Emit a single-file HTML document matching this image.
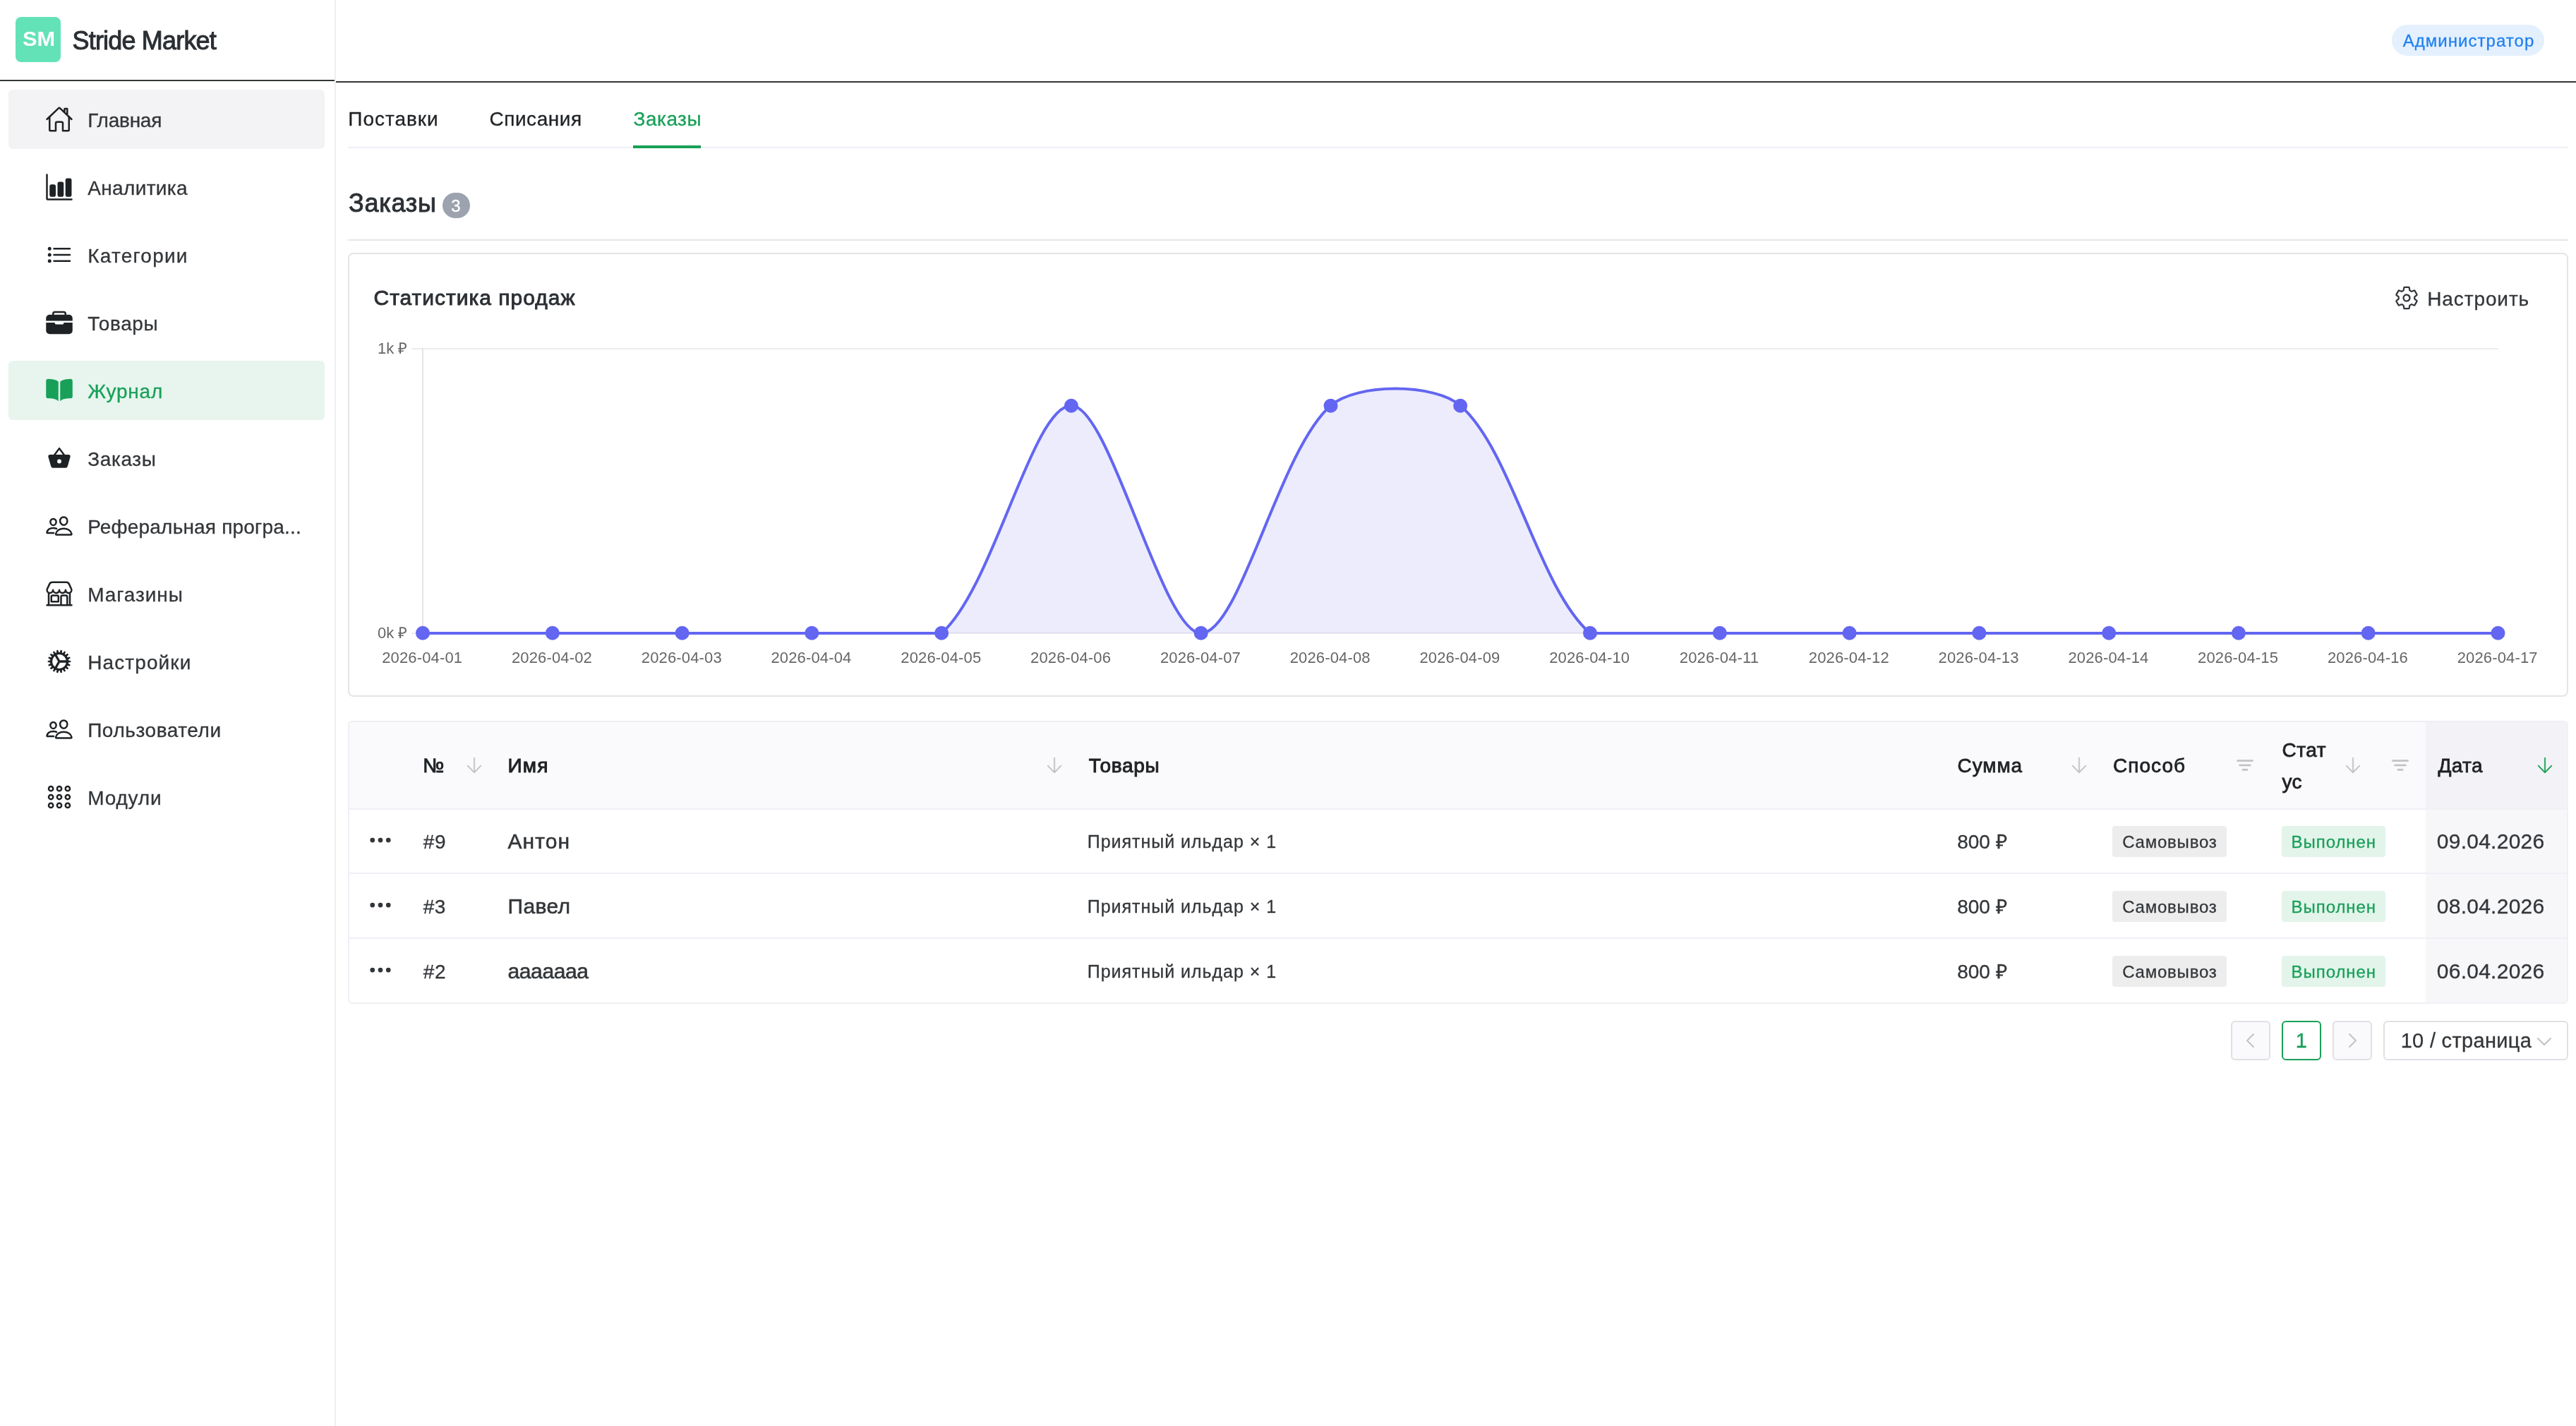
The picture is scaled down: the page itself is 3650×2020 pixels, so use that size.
<!DOCTYPE html>
<html lang="ru"><head><meta charset="utf-8"><title>Stride Market — Журнал · Заказы</title>
<style>
*{box-sizing:border-box;margin:0;padding:0}
html,body{width:3650px;height:2020px;overflow:hidden;background:#fff}
body{position:relative;font-family:'Liberation Sans',sans-serif;color:#333639;-webkit-font-smoothing:antialiased;will-change:transform}
span[id^=t],div[id^=t],h2[id^=t],h3[id^=t]{position:absolute;white-space:pre;font-weight:400}
svg.ion,svg.nv{position:absolute;display:block}
a{color:inherit;text-decoration:none}
.sider{position:absolute;left:0;top:0;width:476px;height:2020px;border-right:2px solid #efeff5;background:#fff}
.brand{position:absolute;left:0;top:0;width:474px;height:115px;border-bottom:2px solid #333639}
.logo{position:absolute;left:22px;top:24px;width:64px;height:64px;border-radius:8px;background:#63e2b7}
.logo span{font-weight:700 !important}
.menu{position:absolute;left:0;top:0;width:474px}
.item{position:absolute;left:12px;width:448px;height:84px;border-radius:6px;color:#333639;display:block}
.item svg{color:#1f2225}
.item.hover{background:#f3f3f5}
.item.active{background:#e7f5ee;color:#18a058}
.item.active svg{color:#18a058}
.topbar{position:absolute;left:476px;top:0;width:3174px;height:117px;border-bottom:2px solid #333639;background:#fff}
.role{position:absolute;left:2913px;top:35px;width:216px;height:44px;border-radius:22px;background:#e4f0fd}
main{position:absolute;left:0;top:0;width:3650px;height:2020px;pointer-events:none}
.tabs .rail{position:absolute;left:493px;top:208px;width:3146px;height:2px;background:#efeff5}
.tabs .bar{position:absolute;left:897px;top:206px;width:96px;height:4px;background:#18a058}
.badge{position:absolute;left:627px;top:273px;width:39px;height:36px;border-radius:18px;background:#9ca3af}
.divider{position:absolute;left:493px;top:339px;width:3146px;height:2px;border:0;background:#e6e6eb}
.card{position:absolute;left:493px;top:358px;width:3146px;height:629px;border:2px solid #e5e5e6;border-radius:8px;background:#fff}
.card h3,.card .cfg,.card svg.chart{position:absolute}
.cfg{left:2897px;top:44px;width:200px;height:40px;border:0;background:none;font:inherit;color:#333639;text-align:left}
.cfg svg{color:#333639}
svg.chart{left:-2px;top:-2px}
.table{position:absolute;left:493px;top:1021px;width:3146px;height:401px;border:2px solid #efeff5;border-radius:6px;overflow:hidden;background:#fff}
.thead{position:absolute;left:0;top:0;width:3142px;height:124px;background:#fafafc;border-bottom:2px solid #efeff5}
.thead .sorted{position:absolute;left:2942px;top:0;width:200px;height:122px;background:#f3f3f7}
.tr{position:absolute;left:0;width:3142px;border-bottom:0;box-shadow:0 2px 0 #efeff5}
.tr .sorted{position:absolute;left:2942px;top:0;width:200px;height:100%;background:#f7f7fa}
.tr svg.ion{color:#333639}
.tag{position:absolute;height:44px;border-radius:4px;background:#ededee}
.tag.ok{background:#e3f4eb}
.pager{position:absolute;left:0;top:1446px;width:3650px;height:56px}
.pbtn{position:absolute;top:0;width:56px;height:56px;border:2px solid #e0e0e6;border-radius:6px;background:#fff}
.pbtn.dis{background:#fafafc;color:#c2c2c2}
.pbtn.cur{border-color:#18a058}
.psel{position:absolute;left:3377px;top:0;width:262px;height:56px;border:2px solid #e0e0e6;border-radius:6px;background:#fff}
.pbtn>*,.psel>*{margin:-2px 0 0 -2px}
</style></head>
<body>
<aside class="sider">
<div class="brand"><div class="logo"><span id="t1" style="left:9.65px;top:15.30px;font-size:29px;line-height:32px;font-weight:700;color:#fff;transform:scaleX(1.06);transform-origin:0 50%;">SM</span></div>
<div id="t2" class="brandname" style="left:102.50px;top:36.50px;font-size:36px;line-height:41px;color:#2b2f33;letter-spacing:-0.812px;-webkit-text-stroke:1.0px currentColor;">Stride Market</div>
</div>
<nav class="menu">
<a class="item hover" style="top:127px">
<svg class="ion" style="width:40px;height:40px;left:52px;top:22px" viewBox="0 0 512 512" aria-hidden="true"><path d="M80 212v236a16 16 0 0016 16h96V328a24 24 0 0124-24h80a24 24 0 0124 24v136h96a16 16 0 0016-16V212" fill="none" stroke="currentColor" stroke-linecap="round" stroke-linejoin="round" stroke-width="32"/><path d="M480 256L266.89 52c-5-5.28-16.69-5.34-21.78 0L32 256M400 179V64h-48v69" fill="none" stroke="currentColor" stroke-linecap="round" stroke-linejoin="round" stroke-width="32"/></svg>
<span id="t3" style="left:112.20px;top:28.00px;font-size:28px;line-height:31px;letter-spacing:-0.233px;-webkit-text-stroke:0.3px currentColor;">Главная</span>
</a>
<a class="item" style="top:223px">
<svg class="ion" style="width:40px;height:40px;left:52px;top:22px" viewBox="0 0 512 512" aria-hidden="true"><path fill="currentColor" d="M480 496H48a32 32 0 01-32-32V32a16 16 0 0116-16h0a16 16 0 0116 16v432h432a16 16 0 0116 16h0a16 16 0 01-16 16z"/><path fill="currentColor" d="M156 432h-40a36 36 0 01-36-36V244a36 36 0 0136-36h40a36 36 0 0136 36v152a36 36 0 01-36 36zM300 432h-40a36 36 0 01-36-36V196a36 36 0 0136-36h40a36 36 0 0136 36v200a36 36 0 01-36 36zM443.64 432h-40a36 36 0 01-36-36V132a36 36 0 0136-36h40a36 36 0 0136 36v264a36 36 0 01-36 36z"/></svg>
<span id="t4" style="left:112.20px;top:28.00px;font-size:28px;line-height:31px;letter-spacing:0.356px;-webkit-text-stroke:0.3px currentColor;">Аналитика</span>
</a>
<a class="item" style="top:319px">
<svg class="ion" style="width:40px;height:40px;left:52px;top:22px" viewBox="0 0 512 512" aria-hidden="true"><path d="M160 144h288M160 256h288M160 368h288" fill="none" stroke="currentColor" stroke-linecap="round" stroke-linejoin="round" stroke-width="32"/><circle cx="80" cy="144" r="16" fill="none" stroke="currentColor" stroke-linecap="round" stroke-linejoin="round" stroke-width="32"/><circle cx="80" cy="256" r="16" fill="none" stroke="currentColor" stroke-linecap="round" stroke-linejoin="round" stroke-width="32"/><circle cx="80" cy="368" r="16" fill="none" stroke="currentColor" stroke-linecap="round" stroke-linejoin="round" stroke-width="32"/></svg>
<span id="t5" style="left:112.20px;top:28.00px;font-size:28px;line-height:31px;letter-spacing:1.244px;-webkit-text-stroke:0.3px currentColor;">Категории</span>
</a>
<a class="item" style="top:415px">
<svg class="ion" style="width:40px;height:40px;left:52px;top:22px" viewBox="0 0 512 512" aria-hidden="true"><path fill="currentColor" d="M496 176a64.07 64.07 0 00-64-64h-48V96a48.05 48.05 0 00-48-48H176a48.05 48.05 0 00-48 48v16H80a64.07 64.07 0 00-64 64v48h480zm-144-64H160V96a16 16 0 0116-16h160a16 16 0 0116 16zM336 264a24 24 0 01-24 24H200a24 24 0 01-24-24v-4a4 4 0 00-4-4H16v144a64 64 0 0064 64h352a64 64 0 0064-64V256H340a4 4 0 00-4 4z"/></svg>
<span id="t6" style="left:112.20px;top:28.00px;font-size:28px;line-height:31px;letter-spacing:0.640px;-webkit-text-stroke:0.3px currentColor;">Товары</span>
</a>
<a class="item active" style="top:511px">
<svg class="ion" style="width:40px;height:40px;left:52px;top:22px" viewBox="0 0 512 512" aria-hidden="true"><path fill="currentColor" d="M202.24 74C166.11 56.75 115.61 48.3 48 48a31.36 31.36 0 00-17.92 5.33A32 32 0 0016 79.9V366c0 19.34 13.76 33.93 32 33.93 71.07 0 142.36 6.64 185.06 47a4.11 4.11 0 006.94-3V106.82a15.89 15.89 0 00-5.46-12A143 143 0 00202.24 74zM481.92 53.3A31.33 31.33 0 00464 48c-67.61.3-118.11 8.71-154.24 26a143.31 143.31 0 00-32.31 20.78 15.93 15.93 0 00-5.45 12v337.13a3.93 3.93 0 006.68 2.81c25.67-25.5 70.72-46.82 185.36-46.81a32 32 0 0032-32v-288a32 32 0 00-14.12-26.61z"/></svg>
<span id="t7" style="left:112.20px;top:28.00px;font-size:28px;line-height:31px;letter-spacing:0.780px;-webkit-text-stroke:0.3px currentColor;">Журнал</span>
</a>
<a class="item" style="top:607px">
<svg class="ion" style="width:40px;height:40px;left:52px;top:22px" viewBox="0 0 512 512" aria-hidden="true"><path fill="currentColor" d="M424.11 192H360L268.8 70.4a16 16 0 00-25.6 0L152 192H87.89a32.57 32.57 0 00-32.62 32.44 30.3 30.3 0 001.31 9l46.27 163.14a50.72 50.72 0 0048.84 36.91h208.62a51.21 51.21 0 0049-36.86L455.12 233.57a30.62 30.62 0 001.31-9A32.57 32.57 0 00424.11 192zM256 106.67L320 192H192zm0 245a37.7 37.7 0 1137.88-37.7A37.87 37.87 0 01256 351.63z"/></svg>
<span id="t8" style="left:112.20px;top:28.00px;font-size:28px;line-height:31px;letter-spacing:0.620px;-webkit-text-stroke:0.3px currentColor;">Заказы</span>
</a>
<a class="item" style="top:703px">
<svg class="ion" style="width:40px;height:40px;left:52px;top:22px" viewBox="0 0 512 512" aria-hidden="true"><path d="M402 168c-2.93 40.67-33.1 72-66 72s-63.12-31.32-66-72c-3-42.31 26.37-72 66-72s69 30.46 66 72z" fill="none" stroke="currentColor" stroke-linecap="round" stroke-linejoin="round" stroke-width="32"/><path d="M336 304c-65.17 0-127.84 32.37-143.54 95.41-2.08 8.34 3.15 16.59 11.72 16.59h263.65c8.57 0 13.77-8.25 11.72-16.59C463.85 335.36 401.18 304 336 304z" fill="none" stroke="currentColor" stroke-linecap="round" stroke-linejoin="round" stroke-width="32"/><path d="M200 185.94c-2.34 32.48-26.72 58.06-53 58.06s-50.7-25.57-53-58.06C91.61 152.15 115.34 128 147 128s55.39 24.77 53 57.94z" fill="none" stroke="currentColor" stroke-linecap="round" stroke-linejoin="round" stroke-width="32"/><path d="M206 306c-18.05-8.27-37.93-11.45-59-11.45-52 0-102.1 25.85-114.65 76.2-1.65 6.66 2.53 13.25 9.37 13.25H154" fill="none" stroke="currentColor" stroke-linecap="round" stroke-linejoin="round" stroke-width="32"/></svg>
<span id="t9" style="left:112.20px;top:28.00px;font-size:28px;line-height:31px;letter-spacing:0.190px;-webkit-text-stroke:0.3px currentColor;">Реферальная програ...</span>
</a>
<a class="item" style="top:799px">
<svg class="ion" style="width:40px;height:40px;left:52px;top:22px" viewBox="0 0 512 512" aria-hidden="true"><path d="M448 448V240M64 240v208M382.47 48H129.53c-21.79 0-41.47 12-49.93 30.46L36.3 173c-14.58 31.81 9.63 67.85 47.19 69h2c31.4 0 56.85-25.18 56.85-52.23 0 27 25.46 52.23 56.86 52.23s56.8-23.38 56.8-52.23c0 27 25.45 52.23 56.85 52.23s56.86-23.38 56.86-52.23c0 28.85 25.45 52.23 56.85 52.23h1.95c37.56-1.17 61.77-37.21 47.19-69l-43.3-94.54C423.94 60 404.26 48 382.47 48zM32 464h448M136 288h80a24 24 0 0124 24v88H112v-88a24 24 0 0124-24zM288 464V312a24 24 0 0124-24h64a24 24 0 0124 24v152" fill="none" stroke="currentColor" stroke-linecap="round" stroke-linejoin="round" stroke-width="32"/></svg>
<span id="t10" style="left:112.20px;top:28.00px;font-size:28px;line-height:31px;letter-spacing:0.929px;-webkit-text-stroke:0.3px currentColor;">Магазины</span>
</a>
<a class="item" style="top:895px">
<svg class="ion" style="width:40px;height:40px;left:52px;top:22px" viewBox="0 0 512 512" aria-hidden="true"><path d="M411.3 240.8L458.9 248.2L458.9 263.8L411.3 271.2ZM407.1 294.8L449.3 318.1L444.0 332.7L396.7 323.4ZM384.7 344.1L416.4 380.4L406.4 392.4L365.1 367.5ZM346.8 382.8L364.2 427.8L350.7 435.6L320.4 398.1ZM298.0 406.3L298.9 454.4L283.6 457.1L268.0 411.5ZM244.0 411.5L228.4 457.1L213.1 454.4L214.0 406.3ZM191.6 398.1L161.3 435.6L147.8 427.8L165.2 382.8ZM146.9 367.5L105.6 392.4L95.6 380.4L127.3 344.1ZM115.3 323.4L68.0 332.7L62.7 318.1L104.9 294.8ZM100.7 271.2L53.1 263.8L53.1 248.2L100.7 240.8ZM104.9 217.2L62.7 193.9L68.0 179.3L115.3 188.6ZM127.3 167.9L95.6 131.6L105.6 119.6L146.9 144.5ZM165.2 129.2L147.8 84.2L161.3 76.4L191.6 113.9ZM214.0 105.7L213.1 57.6L228.4 54.9L244.0 100.5ZM268.0 100.5L283.6 54.9L298.9 57.6L298.0 105.7ZM320.4 113.9L350.7 76.4L364.2 84.2L346.8 129.2ZM365.1 144.5L406.4 119.6L416.4 131.6L384.7 167.9ZM396.7 188.6L444.0 179.3L449.3 193.9L407.1 217.2Z" fill="currentColor" stroke="currentColor" stroke-width="13" stroke-linejoin="round"/><circle cx="256" cy="256" r="146" fill="none" stroke="currentColor" stroke-width="38"/><path d="M256 256L400.0 256.0M256 256L184.0 380.7M256 256L184.0 131.3" fill="none" stroke="currentColor" stroke-width="42" stroke-linecap="round" stroke-linejoin="round"/></svg>
<span id="t11" style="left:112.20px;top:28.00px;font-size:28px;line-height:31px;letter-spacing:1.106px;-webkit-text-stroke:0.3px currentColor;">Настройки</span>
</a>
<a class="item" style="top:991px">
<svg class="ion" style="width:40px;height:40px;left:52px;top:22px" viewBox="0 0 512 512" aria-hidden="true"><path d="M402 168c-2.93 40.67-33.1 72-66 72s-63.12-31.32-66-72c-3-42.31 26.37-72 66-72s69 30.46 66 72z" fill="none" stroke="currentColor" stroke-linecap="round" stroke-linejoin="round" stroke-width="32"/><path d="M336 304c-65.17 0-127.84 32.37-143.54 95.41-2.08 8.34 3.15 16.59 11.72 16.59h263.65c8.57 0 13.77-8.25 11.72-16.59C463.85 335.36 401.18 304 336 304z" fill="none" stroke="currentColor" stroke-linecap="round" stroke-linejoin="round" stroke-width="32"/><path d="M200 185.94c-2.34 32.48-26.72 58.06-53 58.06s-50.7-25.57-53-58.06C91.61 152.15 115.34 128 147 128s55.39 24.77 53 57.94z" fill="none" stroke="currentColor" stroke-linecap="round" stroke-linejoin="round" stroke-width="32"/><path d="M206 306c-18.05-8.27-37.93-11.45-59-11.45-52 0-102.1 25.85-114.65 76.2-1.65 6.66 2.53 13.25 9.37 13.25H154" fill="none" stroke="currentColor" stroke-linecap="round" stroke-linejoin="round" stroke-width="32"/></svg>
<span id="t12" style="left:112.20px;top:28.00px;font-size:28px;line-height:31px;letter-spacing:0.559px;-webkit-text-stroke:0.3px currentColor;">Пользователи</span>
</a>
<a class="item" style="top:1087px">
<svg class="ion" style="width:40px;height:40px;left:52px;top:22px" viewBox="0 0 512 512" aria-hidden="true"><rect x="64" y="64" width="80" height="80" rx="40" ry="40" fill="none" stroke="currentColor" stroke-miterlimit="10" stroke-width="32"/><rect x="216" y="64" width="80" height="80" rx="40" ry="40" fill="none" stroke="currentColor" stroke-miterlimit="10" stroke-width="32"/><rect x="368" y="64" width="80" height="80" rx="40" ry="40" fill="none" stroke="currentColor" stroke-miterlimit="10" stroke-width="32"/><rect x="64" y="216" width="80" height="80" rx="40" ry="40" fill="none" stroke="currentColor" stroke-miterlimit="10" stroke-width="32"/><rect x="216" y="216" width="80" height="80" rx="40" ry="40" fill="none" stroke="currentColor" stroke-miterlimit="10" stroke-width="32"/><rect x="368" y="216" width="80" height="80" rx="40" ry="40" fill="none" stroke="currentColor" stroke-miterlimit="10" stroke-width="32"/><rect x="64" y="368" width="80" height="80" rx="40" ry="40" fill="none" stroke="currentColor" stroke-miterlimit="10" stroke-width="32"/><rect x="216" y="368" width="80" height="80" rx="40" ry="40" fill="none" stroke="currentColor" stroke-miterlimit="10" stroke-width="32"/><rect x="368" y="368" width="80" height="80" rx="40" ry="40" fill="none" stroke="currentColor" stroke-miterlimit="10" stroke-width="32"/></svg>
<span id="t13" style="left:112.20px;top:28.00px;font-size:28px;line-height:31px;letter-spacing:0.830px;-webkit-text-stroke:0.3px currentColor;">Модули</span>
</a>
</nav></aside>
<header class="topbar"><div class="role"><span id="t14" style="left:15.65px;top:9.00px;font-size:24px;line-height:27px;color:#2080f0;letter-spacing:1.037px;-webkit-text-stroke:0.3px currentColor;">Администратор</span></div></header>
<main>
<div class="tabs">
<span id="t15" class="tab" style="left:493.30px;top:153.00px;font-size:28px;line-height:31px;color:#1f2225;letter-spacing:0.971px;-webkit-text-stroke:0.3px currentColor;">Поставки</span>
<span id="t16" class="tab" style="left:693.40px;top:153.00px;font-size:28px;line-height:31px;color:#1f2225;letter-spacing:0.564px;-webkit-text-stroke:0.3px currentColor;">Списания</span>
<span id="t17" class="tab on" style="left:897.60px;top:153.00px;font-size:28px;line-height:31px;color:#18a058;letter-spacing:0.480px;-webkit-text-stroke:0.3px currentColor;">Заказы</span>
<i class="rail"></i><i class="bar"></i></div>
<h2 id="t18" style="left:493.95px;top:267.00px;font-size:36px;line-height:41px;color:#2c3035;letter-spacing:0.740px;-webkit-text-stroke:0.9px currentColor;">Заказы</h2>
<span class="badge"><span id="t19" style="left:12.20px;top:5.00px;font-size:24px;line-height:27px;color:#fff;-webkit-text-stroke:0.3px currentColor;">3</span></span>
<hr class="divider">
<section class="card">
<h3 id="t20" style="left:34.55px;top:44.70px;font-size:30px;line-height:33px;color:#2c3035;letter-spacing:0.988px;-webkit-text-stroke:0.9px currentColor;">Статистика продаж</h3>
<button class="cfg"><svg class="ion" style="width:36px;height:36px;left:0;top:0" viewBox="0 0 512 512" aria-hidden="true"><path d="M262.29 192.31a64 64 0 1057.4 57.4 64.13 64.13 0 00-57.4-57.4zM416.39 256a154.34 154.34 0 01-1.53 20.79l45.21 35.46a10.81 10.81 0 012.45 13.75l-42.77 74a10.81 10.81 0 01-13.14 4.59l-44.9-18.08a16.11 16.11 0 00-15.17 1.75A164.48 164.48 0 01325 400.8a15.94 15.94 0 00-8.82 12.14l-6.73 47.89a11.08 11.08 0 01-10.68 9.17h-85.54a11.11 11.11 0 01-10.69-8.87l-6.72-47.82a16.07 16.07 0 00-9-12.22 155.3 155.3 0 01-21.46-12.57 16 16 0 00-15.11-1.71l-44.89 18.07a10.81 10.81 0 01-13.14-4.58l-42.77-74a10.8 10.8 0 012.45-13.75l38.21-30a16.05 16.05 0 006-14.08c-.36-4.17-.58-8.33-.58-12.5s.21-8.27.58-12.35a16 16 0 00-6.07-13.94l-38.19-30A10.81 10.81 0 0149.48 186l42.77-74a10.81 10.81 0 0113.14-4.59l44.9 18.08a16.11 16.11 0 0015.17-1.75A164.48 164.48 0 01187 111.2a15.94 15.94 0 008.82-12.14l6.73-47.89A11.08 11.08 0 01213.23 42h85.54a11.11 11.11 0 0110.69 8.87l6.72 47.82a16.07 16.07 0 009 12.22 155.3 155.3 0 0121.46 12.57 16 16 0 0015.11 1.71l44.89-18.07a10.81 10.81 0 0113.14 4.58l42.77 74a10.8 10.8 0 01-2.45 13.75l-38.21 30a16.05 16.05 0 00-6.05 14.08c.33 4.14.55 8.3.55 12.47z" fill="none" stroke="currentColor" stroke-linecap="round" stroke-linejoin="round" stroke-width="32"/></svg><span id="t21" style="left:47.20px;top:4.20px;font-size:28px;line-height:31px;color:#333639;letter-spacing:0.900px;-webkit-text-stroke:0.3px currentColor;">Настроить</span></button>
<svg class="chart" width="3146" height="629" viewBox="493 358 3146 629" font-family="Liberation Sans, sans-serif" font-size="22" fill="#666"><g fill="#ececec"><rect x="583" y="493" width="2957.0" height="2"/><rect x="583" y="896" width="2957.0" height="2"/><rect x="598" y="493" width="2" height="405" fill="#e5e5e5"/></g><path d="M599.0 897.0H782.8H966.6H1150.3H1334.1C1407.9 832.3 1462.8 574.6 1517.9 574.6C1573.0 574.6 1646.6 897.0 1701.7 897.0C1756.8 897.0 1811.7 639.3 1885.5 574.6C1922.0 542.6 2032.7 542.6 2069.2 574.6C2143.0 639.3 2179.3 832.3 2253.0 897.0H2436.8H2620.6H2804.4H2988.2H3171.9H3355.7H3539.5V897.0H599.0Z" fill="rgba(99,102,241,0.12)"/><path d="M599.0 897.0H782.8H966.6H1150.3H1334.1C1407.9 832.3 1462.8 574.6 1517.9 574.6C1573.0 574.6 1646.6 897.0 1701.7 897.0C1756.8 897.0 1811.7 639.3 1885.5 574.6C1922.0 542.6 2032.7 542.6 2069.2 574.6C2143.0 639.3 2179.3 832.3 2253.0 897.0H2436.8H2620.6H2804.4H2988.2H3171.9H3355.7H3539.5" fill="none" stroke="#6366f1" stroke-width="4" stroke-linejoin="round"/><g fill="#6366f1"><circle cx="599.0" cy="896.7" r="10"/><circle cx="782.8" cy="896.7" r="10"/><circle cx="966.6" cy="896.7" r="10"/><circle cx="1150.3" cy="896.7" r="10"/><circle cx="1334.1" cy="896.7" r="10"/><circle cx="1517.9" cy="574.8" r="10"/><circle cx="1701.7" cy="896.7" r="10"/><circle cx="1885.5" cy="574.8" r="10"/><circle cx="2069.2" cy="574.8" r="10"/><circle cx="2253.0" cy="896.7" r="10"/><circle cx="2436.8" cy="896.7" r="10"/><circle cx="2620.6" cy="896.7" r="10"/><circle cx="2804.4" cy="896.7" r="10"/><circle cx="2988.2" cy="896.7" r="10"/><circle cx="3171.9" cy="896.7" r="10"/><circle cx="3355.7" cy="896.7" r="10"/><circle cx="3539.5" cy="896.7" r="10"/></g><g text-anchor="end"><text x="577.3" y="500.8">1k ₽</text><text x="577.3" y="903.6">0k ₽</text></g><g text-anchor="middle" letter-spacing=".15"><text x="598.2" y="939">2026-04-01</text><text x="782.0" y="939">2026-04-02</text><text x="965.8" y="939">2026-04-03</text><text x="1149.5" y="939">2026-04-04</text><text x="1333.3" y="939">2026-04-05</text><text x="1517.1" y="939">2026-04-06</text><text x="1700.9" y="939">2026-04-07</text><text x="1884.7" y="939">2026-04-08</text><text x="2068.4" y="939">2026-04-09</text><text x="2252.2" y="939">2026-04-10</text><text x="2436.0" y="939">2026-04-11</text><text x="2619.8" y="939">2026-04-12</text><text x="2803.6" y="939">2026-04-13</text><text x="2987.4" y="939">2026-04-14</text><text x="3171.1" y="939">2026-04-15</text><text x="3354.9" y="939">2026-04-16</text><text x="3538.7" y="939">2026-04-17</text></g></svg>
</section>
<div class="table">
<div class="thead"><i class="sorted"></i>
<span id="t22" class="th" style="left:104.00px;top:45.90px;font-size:28px;line-height:31px;color:#1f2225;-webkit-text-stroke:1.0px currentColor;">№</span>
<span id="t23" class="th" style="left:224.45px;top:45.90px;font-size:28px;line-height:31px;color:#1f2225;letter-spacing:1.250px;-webkit-text-stroke:1.0px currentColor;">Имя</span>
<span id="t24" class="th" style="left:1047.80px;top:45.90px;font-size:28px;line-height:31px;color:#1f2225;letter-spacing:0.700px;-webkit-text-stroke:1.0px currentColor;">Товары</span>
<span id="t25" class="th" style="left:2278.55px;top:45.90px;font-size:28px;line-height:31px;color:#1f2225;letter-spacing:0.900px;-webkit-text-stroke:0.8px currentColor;">Сумма</span>
<span id="t26" class="th" style="left:2498.95px;top:45.90px;font-size:28px;line-height:31px;color:#1f2225;letter-spacing:1.060px;-webkit-text-stroke:0.8px currentColor;">Способ</span>
<span id="t27" class="th" style="left:2959.50px;top:45.90px;font-size:28px;line-height:31px;color:#1f2225;letter-spacing:0.317px;-webkit-text-stroke:0.8px currentColor;">Дата</span>
<span id="thstatus" class="th" style="left:2738.45px;top:16.50px;width:70px;font-size:28px;line-height:45px;letter-spacing:.5px;color:#1f2225;-webkit-text-stroke:.8px currentColor;white-space:normal;word-break:break-all">Статус</span>
<svg class="nv" style="width:28px;height:28px;left:163.0px;top:47.2px;color:#c2c2c2" viewBox="0 0 28 28" aria-hidden="true"><path fill="currentColor" stroke="currentColor" stroke-width=".5" d="M23.7916,15.2664 C24.0788,14.9679 24.0696,14.4931 23.7711,14.206 C23.4726,13.9188 22.9978,13.928 22.7106,14.2265 L14.7511,22.5007 L14.7511,3.74792 C14.7511,3.33371 14.4153,2.99792 14.0011,2.99792 C13.5869,2.99792 13.2511,3.33371 13.2511,3.74793 L13.2511,22.4998 L5.29259,14.2265 C5.00543,13.928 4.53064,13.9188 4.23213,14.206 C3.93361,14.4931 3.9244,14.9679 4.21157,15.2664 L13.2809,24.6944 C13.6743,25.1034 14.3289,25.1034 14.7223,24.6944 L23.7916,15.2664 Z"/></svg>
<svg class="nv" style="width:28px;height:28px;left:984.7px;top:47.2px;color:#c2c2c2" viewBox="0 0 28 28" aria-hidden="true"><path fill="currentColor" stroke="currentColor" stroke-width=".5" d="M23.7916,15.2664 C24.0788,14.9679 24.0696,14.4931 23.7711,14.206 C23.4726,13.9188 22.9978,13.928 22.7106,14.2265 L14.7511,22.5007 L14.7511,3.74792 C14.7511,3.33371 14.4153,2.99792 14.0011,2.99792 C13.5869,2.99792 13.2511,3.33371 13.2511,3.74793 L13.2511,22.4998 L5.29259,14.2265 C5.00543,13.928 4.53064,13.9188 4.23213,14.206 C3.93361,14.4931 3.9244,14.9679 4.21157,15.2664 L13.2809,24.6944 C13.6743,25.1034 14.3289,25.1034 14.7223,24.6944 L23.7916,15.2664 Z"/></svg>
<svg class="nv" style="width:28px;height:28px;left:2437.0px;top:47.2px;color:#c2c2c2" viewBox="0 0 28 28" aria-hidden="true"><path fill="currentColor" stroke="currentColor" stroke-width=".5" d="M23.7916,15.2664 C24.0788,14.9679 24.0696,14.4931 23.7711,14.206 C23.4726,13.9188 22.9978,13.928 22.7106,14.2265 L14.7511,22.5007 L14.7511,3.74792 C14.7511,3.33371 14.4153,2.99792 14.0011,2.99792 C13.5869,2.99792 13.2511,3.33371 13.2511,3.74793 L13.2511,22.4998 L5.29259,14.2265 C5.00543,13.928 4.53064,13.9188 4.23213,14.206 C3.93361,14.4931 3.9244,14.9679 4.21157,15.2664 L13.2809,24.6944 C13.6743,25.1034 14.3289,25.1034 14.7223,24.6944 L23.7916,15.2664 Z"/></svg>
<svg class="nv" style="width:28px;height:28px;left:2824.6px;top:47.2px;color:#c2c2c2" viewBox="0 0 28 28" aria-hidden="true"><path fill="currentColor" stroke="currentColor" stroke-width=".5" d="M23.7916,15.2664 C24.0788,14.9679 24.0696,14.4931 23.7711,14.206 C23.4726,13.9188 22.9978,13.928 22.7106,14.2265 L14.7511,22.5007 L14.7511,3.74792 C14.7511,3.33371 14.4153,2.99792 14.0011,2.99792 C13.5869,2.99792 13.2511,3.33371 13.2511,3.74793 L13.2511,22.4998 L5.29259,14.2265 C5.00543,13.928 4.53064,13.9188 4.23213,14.206 C3.93361,14.4931 3.9244,14.9679 4.21157,15.2664 L13.2809,24.6944 C13.6743,25.1034 14.3289,25.1034 14.7223,24.6944 L23.7916,15.2664 Z"/></svg>
<svg class="nv" style="width:28px;height:28px;left:3097.0px;top:47.2px;color:#18a058" viewBox="0 0 28 28" aria-hidden="true"><path fill="currentColor" stroke="currentColor" stroke-width=".5" d="M23.7916,15.2664 C24.0788,14.9679 24.0696,14.4931 23.7711,14.206 C23.4726,13.9188 22.9978,13.928 22.7106,14.2265 L14.7511,22.5007 L14.7511,3.74792 C14.7511,3.33371 14.4153,2.99792 14.0011,2.99792 C13.5869,2.99792 13.2511,3.33371 13.2511,3.74793 L13.2511,22.4998 L5.29259,14.2265 C5.00543,13.928 4.53064,13.9188 4.23213,14.206 C3.93361,14.4931 3.9244,14.9679 4.21157,15.2664 L13.2809,24.6944 C13.6743,25.1034 14.3289,25.1034 14.7223,24.6944 L23.7916,15.2664 Z"/></svg>
<svg class="nv" style="width:30px;height:30px;left:2670.9px;top:46.2px;color:#c2c2c2" viewBox="0 0 28 28" aria-hidden="true"><path fill="currentColor" stroke="currentColor" stroke-width=".5" d="M17,19 C17.5522847,19 18,19.4477153 18,20 C18,20.5522847 17.5522847,21 17,21 L11,21 C10.4477153,21 10,20.5522847 10,20 C10,19.4477153 10.4477153,19 11,19 L17,19 Z M21,13 C21.5522847,13 22,13.4477153 22,14 C22,14.5522847 21.5522847,15 21,15 L7,15 C6.44771525,15 6,14.5522847 6,14 C6,13.4477153 6.44771525,13 7,13 L21,13 Z M24,7 C24.5522847,7 25,7.44771525 25,8 C25,8.55228475 24.5522847,9 24,9 L4,9 C3.44771525,9 3,8.55228475 3,8 C3,7.44771525 3.44771525,7 4,7 L24,7 Z"/></svg>
<svg class="nv" style="width:30px;height:30px;left:2890.7px;top:46.2px;color:#c2c2c2" viewBox="0 0 28 28" aria-hidden="true"><path fill="currentColor" stroke="currentColor" stroke-width=".5" d="M17,19 C17.5522847,19 18,19.4477153 18,20 C18,20.5522847 17.5522847,21 17,21 L11,21 C10.4477153,21 10,20.5522847 10,20 C10,19.4477153 10.4477153,19 11,19 L17,19 Z M21,13 C21.5522847,13 22,13.4477153 22,14 C22,14.5522847 21.5522847,15 21,15 L7,15 C6.44771525,15 6,14.5522847 6,14 C6,13.4477153 6.44771525,13 7,13 L21,13 Z M24,7 C24.5522847,7 25,7.44771525 25,8 C25,8.55228475 24.5522847,9 24,9 L4,9 C3.44771525,9 3,8.55228475 3,8 C3,7.44771525 3.44771525,7 4,7 L24,7 Z"/></svg>
</div>
<div class="tr" style="top:124px;height:89px"><i class="sorted"></i>
<svg class="ion" style="width:36px;height:36px;left:26px;top:24.8px" viewBox="0 0 512 512" aria-hidden="true"><circle cx="256" cy="256" r="48" fill="currentColor"/><circle cx="416" cy="256" r="48" fill="currentColor"/><circle cx="96" cy="256" r="48" fill="currentColor"/></svg>
<span id="t28" style="left:104.75px;top:29.80px;font-size:28px;line-height:31px;color:#333639;letter-spacing:0.750px;-webkit-text-stroke:0.3px currentColor;">#9</span>
<span id="t29" style="left:224.50px;top:27.90px;font-size:30px;line-height:33px;color:#333639;letter-spacing:1.113px;-webkit-text-stroke:0.6px currentColor;">Антон</span>
<span id="t30" style="left:1045.75px;top:30.50px;font-size:25px;line-height:28px;color:#333639;letter-spacing:0.975px;-webkit-text-stroke:0.3px currentColor;">Приятный ильдар × 1</span>
<span id="t31" style="left:2278.25px;top:29.50px;font-size:28px;line-height:31px;color:#333639;letter-spacing:-0.012px;-webkit-text-stroke:0.3px currentColor;">800 ₽</span>
<span class="tag" style="left:2498px;top:23px;width:162px"><span id="t32" style="left:14.15px;top:8.70px;font-size:24px;line-height:27px;color:#333639;letter-spacing:0.787px;-webkit-text-stroke:0.3px currentColor;">Самовывоз</span></span>
<span class="tag ok" style="left:2738px;top:23px;width:147px"><span id="t33" style="left:13.60px;top:8.70px;font-size:24px;line-height:27px;color:#18a058;letter-spacing:0.936px;-webkit-text-stroke:0.3px currentColor;">Выполнен</span></span>
<span id="t34" style="left:2957.75px;top:27.80px;font-size:30px;line-height:33px;color:#333639;letter-spacing:0.256px;-webkit-text-stroke:0.3px currentColor;">09.04.2026</span>
</div>
<div class="tr" style="top:215px;height:90px"><i class="sorted"></i>
<svg class="ion" style="width:36px;height:36px;left:26px;top:25.8px" viewBox="0 0 512 512" aria-hidden="true"><circle cx="256" cy="256" r="48" fill="currentColor"/><circle cx="416" cy="256" r="48" fill="currentColor"/><circle cx="96" cy="256" r="48" fill="currentColor"/></svg>
<span id="t35" style="left:104.75px;top:30.80px;font-size:28px;line-height:31px;color:#333639;letter-spacing:0.500px;-webkit-text-stroke:0.3px currentColor;">#3</span>
<span id="t36" style="left:224.50px;top:28.90px;font-size:30px;line-height:33px;color:#333639;letter-spacing:0.363px;-webkit-text-stroke:0.6px currentColor;">Павел</span>
<span id="t37" style="left:1045.75px;top:31.50px;font-size:25px;line-height:28px;color:#333639;letter-spacing:0.975px;-webkit-text-stroke:0.3px currentColor;">Приятный ильдар × 1</span>
<span id="t38" style="left:2278.25px;top:30.50px;font-size:28px;line-height:31px;color:#333639;letter-spacing:-0.012px;-webkit-text-stroke:0.3px currentColor;">800 ₽</span>
<span class="tag" style="left:2498px;top:24px;width:162px"><span id="t39" style="left:14.15px;top:8.70px;font-size:24px;line-height:27px;color:#333639;letter-spacing:0.787px;-webkit-text-stroke:0.3px currentColor;">Самовывоз</span></span>
<span class="tag ok" style="left:2738px;top:24px;width:147px"><span id="t40" style="left:13.60px;top:8.70px;font-size:24px;line-height:27px;color:#18a058;letter-spacing:0.936px;-webkit-text-stroke:0.3px currentColor;">Выполнен</span></span>
<span id="t41" style="left:2957.75px;top:28.80px;font-size:30px;line-height:33px;color:#333639;letter-spacing:0.256px;-webkit-text-stroke:0.3px currentColor;">08.04.2026</span>
</div>
<div class="tr" style="top:307px;height:90px"><i class="sorted"></i>
<svg class="ion" style="width:36px;height:36px;left:26px;top:25.8px" viewBox="0 0 512 512" aria-hidden="true"><circle cx="256" cy="256" r="48" fill="currentColor"/><circle cx="416" cy="256" r="48" fill="currentColor"/><circle cx="96" cy="256" r="48" fill="currentColor"/></svg>
<span id="t42" style="left:104.75px;top:30.80px;font-size:28px;line-height:31px;color:#333639;letter-spacing:0.750px;-webkit-text-stroke:0.3px currentColor;">#2</span>
<span id="t43" style="left:224.50px;top:28.90px;font-size:30px;line-height:33px;color:#333639;letter-spacing:-0.383px;-webkit-text-stroke:0.6px currentColor;">ааааааа</span>
<span id="t44" style="left:1045.75px;top:31.50px;font-size:25px;line-height:28px;color:#333639;letter-spacing:0.975px;-webkit-text-stroke:0.3px currentColor;">Приятный ильдар × 1</span>
<span id="t45" style="left:2278.25px;top:30.50px;font-size:28px;line-height:31px;color:#333639;letter-spacing:-0.012px;-webkit-text-stroke:0.3px currentColor;">800 ₽</span>
<span class="tag" style="left:2498px;top:24px;width:162px"><span id="t46" style="left:14.15px;top:8.70px;font-size:24px;line-height:27px;color:#333639;letter-spacing:0.787px;-webkit-text-stroke:0.3px currentColor;">Самовывоз</span></span>
<span class="tag ok" style="left:2738px;top:24px;width:147px"><span id="t47" style="left:13.60px;top:8.70px;font-size:24px;line-height:27px;color:#18a058;letter-spacing:0.936px;-webkit-text-stroke:0.3px currentColor;">Выполнен</span></span>
<span id="t48" style="left:2957.75px;top:28.80px;font-size:30px;line-height:33px;color:#333639;letter-spacing:0.256px;-webkit-text-stroke:0.3px currentColor;">06.04.2026</span>
</div>
</div>
<div class="pager">
<span class="pbtn dis" style="left:3161px"><svg class="nv" style="width:32px;height:32px;left:12px;top:12px" viewBox="0 0 16 16" aria-hidden="true"><path fill="currentColor" d="M10.3536 3.14645C10.5488 3.34171 10.5488 3.65829 10.3536 3.85355L6.20711 8L10.3536 12.1464C10.5488 12.3417 10.5488 12.6583 10.3536 12.8536C10.1583 13.0488 9.84171 13.0488 9.64645 12.8536L5.14645 8.35355C4.95118 8.15829 4.95118 7.84171 5.14645 7.64645L9.64645 3.14645C9.84171 2.95118 10.1583 2.95118 10.3536 3.14645Z"/></svg></span>
<span class="pbtn cur" style="left:3233px"><span id="t49" style="left:19.70px;top:12.20px;font-size:29px;line-height:32px;color:#18a058;-webkit-text-stroke:0.4px currentColor;">1</span></span>
<span class="pbtn dis" style="left:3305px"><svg class="nv" style="width:32px;height:32px;left:12px;top:12px" viewBox="0 0 16 16" aria-hidden="true"><path fill="currentColor" d="M5.64645 3.14645C5.45118 3.34171 5.45118 3.65829 5.64645 3.85355L9.79289 8L5.64645 12.1464C5.45118 12.3417 5.45118 12.6583 5.64645 12.8536C5.84171 13.0488 6.15829 13.0488 6.35355 12.8536L10.8536 8.35355C11.0488 8.15829 11.0488 7.84171 10.8536 7.64645L6.35355 3.14645C6.15829 2.95118 5.84171 2.95118 5.64645 3.14645Z"/></svg></span>
<span class="psel"><span id="t50" style="left:24.65px;top:12.20px;font-size:29px;line-height:32px;color:#333639;letter-spacing:0.308px;-webkit-text-stroke:0.3px currentColor;">10 / страница</span><svg class="nv" style="width:32px;height:32px;left:212px;top:13px;color:#c2c2c2" viewBox="0 0 16 16" aria-hidden="true"><path fill="currentColor" d="M3.14645 5.64645C3.34171 5.45118 3.65829 5.45118 3.85355 5.64645L8 9.79289L12.1464 5.64645C12.3417 5.45118 12.6583 5.45118 12.8536 5.64645C13.0488 5.84171 13.0488 6.15829 12.8536 6.35355L8.35355 10.8536C8.15829 11.0488 7.84171 11.0488 7.64645 10.8536L3.14645 6.35355C2.95118 6.15829 2.95118 5.84171 3.14645 5.64645Z"/></svg></span>
</div>
</main>
</body></html>
